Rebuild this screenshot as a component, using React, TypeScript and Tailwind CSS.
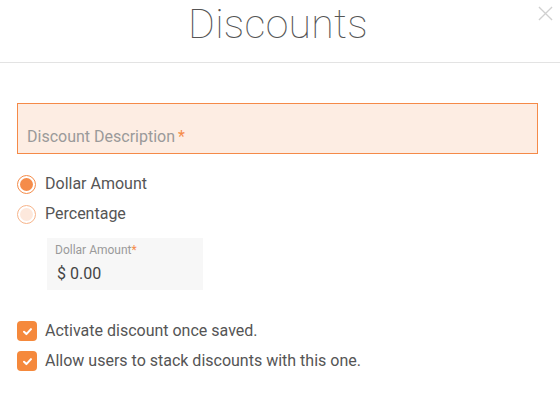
import React, { useState } from "react";

// Orange check mark used inside the checkboxes
const Check = () => (
    <svg viewBox="0 0 12 12" className="w-[11px] h-[11px]">
        <path d="M2.2 6.3 L4.8 8.8 L9.8 3.4" fill="none" stroke="white" strokeWidth="2.2" strokeLinecap="round" strokeLinejoin="round" />
    </svg>
);

const Radio: React.FC<{ checked: boolean; label: string; onClick: () => void }> = ({ checked, label, onClick }) => (
    <div className="flex items-center h-[30px] cursor-pointer" onClick={onClick}>
        <div className={`w-[19px] h-[19px] rounded-full border-[1.5px] flex items-center justify-center ${checked ? "border-[#f58c4a]" : "border-[#f7b48a]"}`}>
            <div className={`w-[13px] h-[13px] rounded-full ${checked ? "bg-[#f58c4a]" : "bg-[#fde8dc]"}`} />
        </div>
        <span className="ml-[9px] text-[16px] text-[#555]">{label}</span>
    </div>
);

const CheckRow: React.FC<{ label: string }> = ({ label }) => (
    <div className="flex items-center h-[30px]">
        <div className="w-[20px] h-[20px] rounded-[4px] bg-[#f5893c] flex items-center justify-center">
            <Check />
        </div>
        <span className="ml-[8px] text-[16px] text-[#555]">{label}</span>
    </div>
);

const App: React.FC = () => {
    const [type, setType] = useState<"dollar" | "percent">("dollar");

    return (
        <div className="w-[560px] h-[417px] bg-white overflow-hidden font-['Roboto',sans-serif]">
            {/* Header */}
            <div className="relative h-[63px] border-b border-[#e3e3e3] flex justify-center">
                <h1 className="text-[41px] font-thin text-[#555] leading-none mt-[4px] tracking-[0.3px] -ml-[4px]">Discounts</h1>
                <svg viewBox="0 0 16 16" className="absolute right-[7px] top-[6px] w-[15px] h-[15px]">
                    <path d="M1 1 L15 15 M15 1 L1 15" stroke="#d0d0d0" strokeWidth="1.4" />
                </svg>
            </div>

            <div className="px-[17px] pt-[40px]">
                {/* Description input */}
                <div className="w-[521px] h-[51px] border border-[#f58a48] bg-[#fdede3] flex items-end pb-[4px] pl-[9px]">
                    <span className="text-[16px] text-[#9a9a9a]">Discount Description</span>
                    <span className="text-[16px] text-[#f58c4a] ml-[3px]">*</span>
                </div>

                <div className="mt-[15px]">
                    <Radio checked={type === "dollar"} label="Dollar Amount" onClick={() => setType("dollar")} />
                    <Radio checked={type === "percent"} label="Percentage" onClick={() => setType("percent")} />
                </div>

                {/* Amount field */}
                <div className="ml-[30px] mt-[9px] w-[156px] h-[52px] bg-[#f7f7f7] pl-[8px] pt-[5px]">
                    <div className="text-[12px] text-[#9a9a9a] leading-[14px]">
                        Dollar Amount<span className="text-[#f58c4a]">*</span>
                    </div>
                    <div className="text-[16px] text-[#444] mt-[8px] ml-[2px] leading-[18px]">$ 0.00</div>
                </div>

                <div className="mt-[26px]">
                    <CheckRow label="Activate discount once saved." />
                    <CheckRow label="Allow users to stack discounts with this one." />
                </div>
            </div>
        </div>
    );
};

export default App;
